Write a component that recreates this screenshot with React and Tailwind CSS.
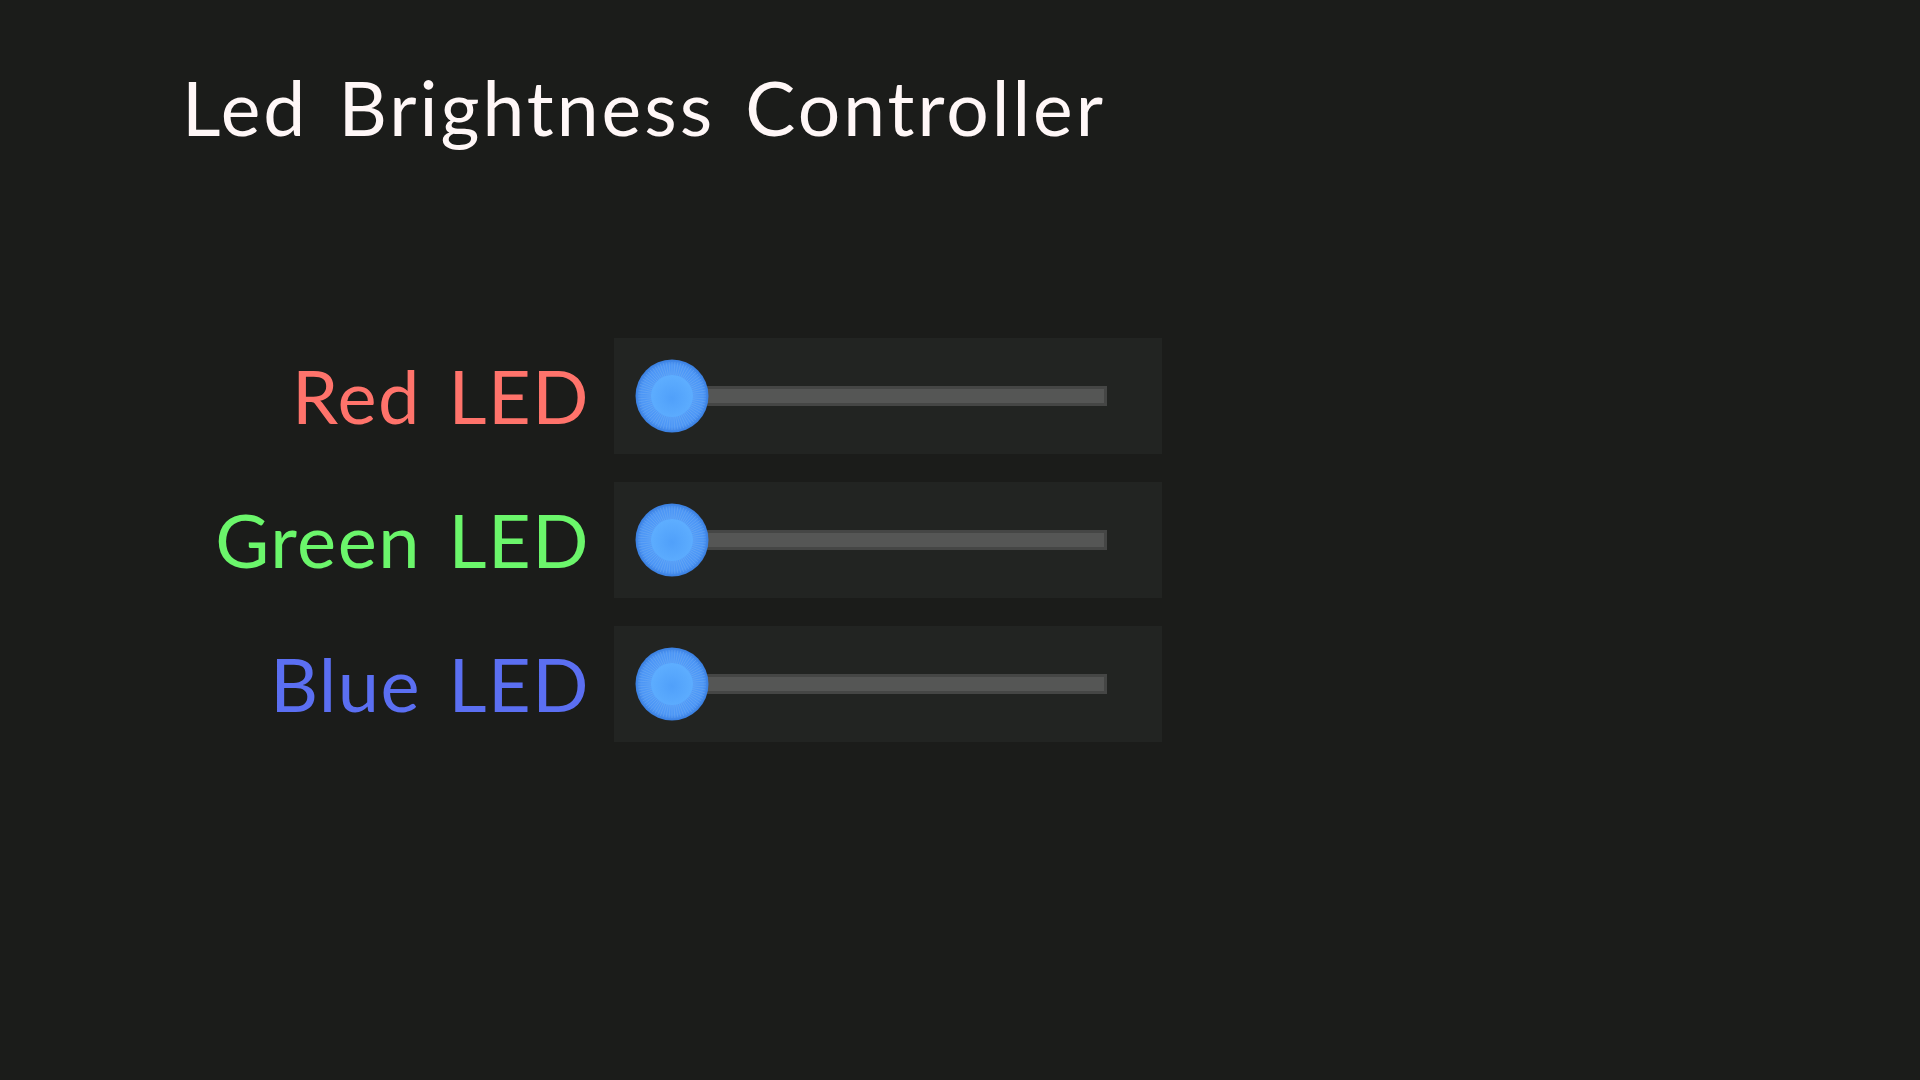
import React from 'react'

const leds = [
  { name: 'Red LED', color: 'text-[#ff736b]' },
  { name: 'Green LED', color: 'text-[#6bf66b]' },
  { name: 'Blue LED', color: 'text-[#5b6ff2]' },
]

function Thumb() {
  const spokes = Array.from({ length: 72 }, (_, i) => i * 5)
  return (
    <svg viewBox="0 0 74 74" className="w-[74px] h-[74px]">
      <defs>
        <radialGradient id="outer" cx="50%" cy="50%" r="50%">
          <stop offset="0%" stopColor="#5aa8ff" />
          <stop offset="85%" stopColor="#4c96f6" />
          <stop offset="100%" stopColor="#3a7fe0" />
        </radialGradient>
        <radialGradient id="inner" cx="50%" cy="55%" r="55%">
          <stop offset="0%" stopColor="#50a0fa" />
          <stop offset="100%" stopColor="#5eaeff" />
        </radialGradient>
      </defs>
      <circle cx="37" cy="37" r="36.5" fill="url(#outer)" />
      {spokes.map(a => (
        <line
          key={a}
          x1="37"
          y1="16"
          x2="37"
          y2="3"
          stroke="#80b4ee"
          strokeOpacity="0.5"
          strokeWidth="0.7"
          transform={`rotate(${a} 37 37)`}
        />
      ))}
      <circle cx="37" cy="37" r="21" fill="url(#inner)" />
    </svg>
  )
}

function Slider() {
  return (
    <div className="relative w-[548px] h-[116px] bg-[#222422] flex items-center pl-[55px] pr-[55px]">
      <div className="flex-1 h-[20px] border-[3px] border-[#454645] bg-[#555655]" />
      <div className="absolute left-[21px] top-1/2 -translate-y-1/2">
        <Thumb />
      </div>
    </div>
  )
}

export default function App() {
  return (
    <div className="w-[1920px] h-[1080px] bg-[#1b1c1a] overflow-hidden" style={{ fontFamily: 'Lato, "Noto Sans", sans-serif' }}>
      <h1 className="pl-[182px] pt-[70px] text-[75px] leading-none font-normal text-[#fff7f7] tracking-[3px] [word-spacing:8px]">
        Led Brightness Controller
      </h1>
      <div className="mt-[193px] flex flex-col gap-[28px]">
        {leds.map(led => (
          <div key={led.name} className="flex items-center">
            <div className={`w-[590px] text-right text-[74px] leading-none ${led.color} tracking-[1.5px] [word-spacing:7px]`}>
              {led.name}
            </div>
            <div className="ml-[24px]">
              <Slider />
            </div>
          </div>
        ))}
      </div>
    </div>
  )
}
